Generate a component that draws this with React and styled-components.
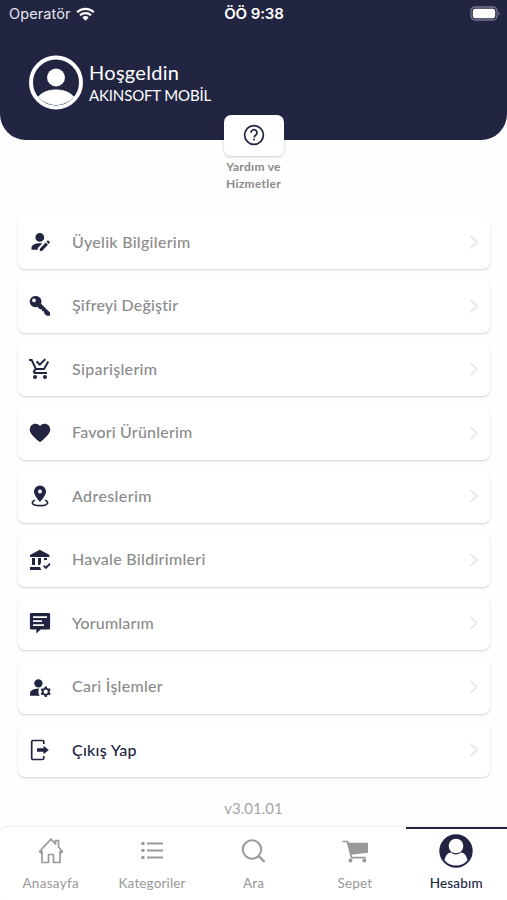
import React, { Fragment } from 'react';
import styled, { createGlobalStyle } from 'styled-components';
import { MdManageAccounts } from 'react-icons/md';

const navy = '#222542';
const grey = '#8b8b8b';

const GlobalStyle = createGlobalStyle`
  * {
    box-sizing: border-box;
  }

  body {
    margin: 0;
    background: #fefefe;
    font-family: Lato, 'Open Sans', sans-serif;
  }
`

const Screen = styled.div`
  display: flex;
  flex-direction: column;
  width: 507px;
  height: 900px;
  overflow: hidden;
`

const Header = styled.header`
  height: 139.5px;
  flex-shrink: 0;
  background: ${navy};
  border-radius: 0 0 26px 26px;
  color: white;
`

const StatusBar = styled.div`
  display: grid;
  grid-template-columns: 1fr auto 1fr;
  align-items: center;
  height: 27px;
  padding: 0 6px 0 9px;
  font-family: Inter, Roboto, sans-serif;
`

const Operator = styled.div`
  display: flex;
  align-items: center;
  gap: 5px;
  font-size: 14.5px;
  letter-spacing: ${props => props.$spacing};
  color: #e4e4ee;
`

const Clock = styled.div`
  margin-right: 2px;
  font-size: 15px;
  font-weight: 600;
  letter-spacing: -0.1px;
`

const Battery = styled.svg`
  justify-self: end;
`

const Profile = styled.div`
  display: flex;
  align-items: center;
  gap: 6px;
  padding: 28px 0 0 28px;
`

const Welcome = styled.div`
  font-size: 20px;
  line-height: 25px;
  letter-spacing: ${props => props.$spacing};
`

const Company = styled.div`
  font-size: 15px;
  line-height: 21px;
  letter-spacing: ${props => props.$spacing};
`

const Help = styled.div`
  display: flex;
  flex-direction: column;
  align-items: center;
  height: 76px;
  flex-shrink: 0;
  margin-top: -24.5px;
  margin-bottom: 24.5px;
`

const HelpButton = styled.button`
  display: flex;
  justify-content: center;
  align-items: center;
  width: 60px;
  height: 41px;
  flex-shrink: 0;
  padding: 0 0 2px;
  border: none;
  border-radius: 7px;
  background: white;
  box-shadow: 0 1px 3px rgba(0, 0, 0, 0.22);
`

const HelpLabel = styled.div`
  margin-top: 3px;
  font-size: 12px;
  font-weight: 700;
  line-height: 16.5px;
  text-align: center;
  letter-spacing: ${props => props.$spacing};
  color: ${grey};
`

const Menu = styled.nav`
  display: flex;
  flex-direction: column;
  gap: 10px;
  padding: 0 17px 0 18px;
`

const MenuRow = styled.a`
  display: flex;
  align-items: center;
  height: 53.5px;
  padding: 0 9px 0 10px;
  border-radius: 7px;
  background: white;
  box-shadow: 0 1px 2px rgba(0, 0, 0, 0.18);
  color: ${props => props.$dark ? navy : grey};
`

const MenuIcon = styled.svg`
  width: 24px;
  height: 24px;
  flex-shrink: 0;
  fill: ${navy};
`

const MenuLabel = styled.span`
  flex: 1;
  margin-left: 20px;
  padding-bottom: 2px;
  font-size: 16px;
  font-weight: 500;
  letter-spacing: ${props => props.$spacing};
`

const Version = styled.div`
  margin-top: 21px;
  font-size: 15px;
  line-height: 20px;
  text-align: center;
  letter-spacing: ${props => props.$spacing};
  color: #a5a5a5;
`

const TabBar = styled.nav`
  display: grid;
  grid-template-columns: repeat(5, 1fr);
  height: 73px;
  flex-shrink: 0;
  margin-top: auto;
  border-radius: 7px 0 0 7px;
  background: white;
  box-shadow: 0 -1px 2px rgba(0, 0, 0, 0.08);
`

const Tab = styled.a`
  display: flex;
  flex-direction: column;
  align-items: center;
  padding-top: 5px;
  border-top: 2px solid ${props => props.$active ? navy : 'transparent'};
  color: ${props => props.$active ? navy : '#999'};
`

const TabLabel = styled.span`
  margin-top: 6px;
  font-size: 13.5px;
  font-weight: ${props => props.$active ? 500 : 400};
  line-height: 18px;
  letter-spacing: ${props => props.$spacing};
`

const menu = [
  {
    label: 'Üyelik Bilgilerim',
    spacing: '0.28px',
    icon: <path d="M21.800 12.800l-1.100 1.100-2.200-2.200 1.100-1.100a.6.6 0 0 1 .8 0l1.400 1.400a.6.6 0 0 1 0 .8M11.800 18.700l6-6.200 2.200 2.200-6 6.200h-2.200v-2.200M11.500 13.300c-4.500 0-8 2-8 4.300v2.100h6.300v-1.800l4.400-4.300c-.8-.2-1.700-.3-2.700-.3m.3-10.300a4.400 4.400 0 1 0 0 8.800 4.400 4.400 0 0 0 0-8.800z" />,
  },
  {
    label: 'Şifreyi Değiştir',
    spacing: '0.17px',
    icon: <path fillRule="evenodd" d="M7.300 2a5.600 5.600 0 1 0 2 10.800l2.600 2.500 2-.1.2 2.100 2-.1.2 2.200 2.500 2.400h3.200v-3.300l-9-8.700A5.600 5.600 0 0 0 7.300 2zM6 4.400a1.900 1.900 0 1 1 0 3.800 1.900 1.900 0 0 1 0-3.800z" />,
  },
  {
    label: 'Siparişlerim',
    spacing: '0.32px',
    icon: <path d="M9 20a2 2 0 1 1-4 0 2 2 0 0 1 4 0m8-2a2 2 0 1 0 0 4 2 2 0 0 0 0-4M7.200 14.800v-.1l.9-1.700h7.400c.7 0 1.400-.4 1.700-1l3.900-7-1.700-1-3.900 7h-7L4.300 2H1v2h2l3.600 7.600L5.200 14c-.1.3-.2.6-.2 1 0 1.100.9 2 2 2h12v-2H7.400c-.1 0-.2-.1-.2-.2M18 2.800l-1.400-1.400-4.800 4.800-2.600-2.600L7.800 5l4 4L18 2.800z" />,
  },
  {
    label: 'Favori Ürünlerim',
    spacing: '0.2px',
    icon: <path d="M12 21.300l-1.500-1.300C5.100 15.200 1.800 12.300 1.800 8.400c0-3.200 2.500-5.600 5.600-5.600 1.800 0 3.500.8 4.600 2.100 1.100-1.300 2.800-2.100 4.600-2.100 3.100 0 5.600 2.400 5.600 5.600 0 3.900-3.300 6.800-8.700 11.600L12 21.300z" />,
  },
  {
    label: 'Adreslerim',
    spacing: '0.38px',
    icon: (
      <Fragment>
        <path fillRule="evenodd" d="M12 1.600a6 6 0 0 0-6 6c0 4.200 6 10.400 6 10.400s6-6.200 6-10.400a6 6 0 0 0-6-6zm0 4a2 2 0 1 1 0 4 2 2 0 0 1 0-4z" />
        <path d="M7 16.200c-1.800.6-2.700 1.300-2.700 2.300 0 2 3.700 3.200 7.700 3.200s7.700-1.200 7.700-3.200c0-1-.9-1.700-2.700-2.300" fill="none" stroke={navy} strokeWidth="1.700" />
      </Fragment>
    ),
  },
  {
    label: 'Havale Bildirimleri',
    spacing: '0.29px',
    icon: <path d="M17.800 21.200L15 18.200l1.200-1.200 1.600 1.600 3.600-3.600 1.200 1.400-4.800 4.800M13 10h-3v7h2.100c.1-.8.5-1.600.9-2.300V10m3 0v2.300c.6-.2 1.300-.3 2-.3.3 0 .7 0 1 .1V10h-3m-3.900 9H2v3h11.500c-.7-.8-1.200-1.800-1.400-3M21.500 7l-9.700-5.300L2 7v2h19.500V7M7 17v-7H4v7h3z" />,
  },
  {
    label: 'Yorumlarım',
    spacing: '0.17px',
    icon: <path fillRule="evenodd" d="M3.300 2h17.400c.8 0 1.400.6 1.400 1.400v13.700c0 .8-.6 1.400-1.400 1.400h-8L8.300 22.500v-4h-5c-.8 0-1.400-.6-1.400-1.400V3.400C1.900 2.600 2.500 2 3.300 2zM5 5.200v1.700h14V5.200zm0 4v1.700h9V9.200zm0 4v1.700h11v-1.700z" />,
  },
  {
    label: 'Cari İşlemler',
    spacing: '0.27px',
    icon: <MdManageAccounts size="25" color={navy} />,
  },
  {
    label: 'Çıkış Yap',
    spacing: '0.27px',
    dark: true,
    icon: (
      <Fragment>
        <path d="M15.800 6V3.800a1.300 1.300 0 0 0-1.300-1.300H5a1.300 1.300 0 0 0-1.300 1.300v16.400A1.300 1.300 0 0 0 5 21.500h9.500a1.300 1.300 0 0 0 1.300-1.300V18" fill="none" stroke={navy} strokeWidth="1.700" />
        <path d="M9 10.200h6.500V7.800l5.300 4.200-5.300 4.200v-2.400H9z" />
      </Fragment>
    ),
  },
];

const tabs = [
  {
    label: 'Anasayfa',
    spacing: '0.3px',
    icon: <path d="M5.500 17.500l1.200 1.200L8 17.500v11h6.500v-8h5v8H26v-11l1.300 1.200 1.200-1.200L24.500 13V6.500h-3V10L17 5.200 5.500 17.500z" fill="none" stroke="currentColor" strokeWidth="1.700" strokeLinejoin="round" />,
  },
  {
    label: 'Kategoriler',
    spacing: '0.15px',
    icon: (
      <Fragment>
        <path d="M12 9.500H28M12 16.500H28M12 23.500H28" stroke="currentColor" strokeWidth="2.200" />
        <path d="M6.500 9.500h3M6.500 16.500h3M6.500 23.500h3" stroke="currentColor" strokeWidth="3" />
      </Fragment>
    ),
  },
  {
    label: 'Ara',
    spacing: '0.2px',
    icon: (
      <Fragment>
        <circle cx="16" cy="15.500" r="9.200" fill="none" stroke="currentColor" strokeWidth="2" />
        <path d="M22.500 22l6 5.800" stroke="currentColor" strokeWidth="2.400" />
      </Fragment>
    ),
  },
  {
    label: 'Sepet',
    spacing: '0.2px',
    icon: (
      <Fragment>
        <path d="M9.500 8.700H30v10.100l-17.500 2z" fill="currentColor" />
        <path d="M4.500 7.500h5l4 16.200h14.300" fill="none" stroke="currentColor" strokeWidth="1.700" />
        <circle cx="12.500" cy="26.500" r="2" fill="currentColor" />
        <circle cx="26.300" cy="26.500" r="2" fill="currentColor" />
      </Fragment>
    ),
  },
  {
    label: 'Hesabım',
    spacing: '0.2px',
    active: true,
    icon: (
      <Fragment>
        <circle cx="17" cy="17" r="16.700" fill={navy} />
        <circle cx="17" cy="12" r="7.300" fill="white" />
        <path d="M5.500 26.200c1-5 3.600-7.700 6.700-7.700 1.300 1.300 3 2 4.800 2s3.500-.7 4.800-2c3.100 0 5.700 2.700 6.700 7.700a15 15 0 0 1-23 0z" fill="white" />
      </Fragment>
    ),
  },
];

function WifiIcon() {
  return (
    <svg width="19" height="14" viewBox="0 0 19 14">
      <path d="M1.200 5.300a12 12 0 0 1 16.600 0M4 8.300a8 8 0 0 1 11 0" fill="none" stroke="white" strokeWidth="2.200" />
      <path d="M6.300 10.600a4.700 4.700 0 0 1 6.400 0L9.500 13.800z" fill="white" />
    </svg>
  );
}

function AvatarIcon() {
  return (
    <svg width="55" height="55" viewBox="0 0 55 55">
      <circle cx="28" cy="27.500" r="25" fill="none" stroke="white" strokeWidth="4" />
      <circle cx="28" cy="22.500" r="9" fill="white" />
      <path d="M10.500 42c3.500-4.700 10-7 17.500-7s14 2.300 17.500 7a24 24 0 0 1-35 0z" fill="white" stroke="white" />
    </svg>
  );
}

export default function App() {
  return (
    <Fragment>
      <GlobalStyle />
      <Screen>
        <Header>
          <StatusBar>
            <Operator $spacing="0.1px">
              Operatör
              <WifiIcon />
            </Operator>
            <Clock>ÖÖ 9:38</Clock>
            <Battery width="31" height="15" viewBox="0 0 31 15">
              <rect x="1" y="1" width="26" height="13" rx="4" fill="none" stroke="#74768a" strokeWidth="1.300" />
              <rect x="2.800" y="2.800" width="22.400" height="9.400" rx="2.200" fill="white" />
              <path d="M28.500 5.500c1.600.6 1.600 3.400 0 4z" fill="#74768a" />
            </Battery>
          </StatusBar>
          <Profile>
            <AvatarIcon />
            <div>
              <Welcome $spacing="0.3px">Hoşgeldin</Welcome>
              <Company $spacing="-0.15px">AKINSOFT MOBİL</Company>
            </div>
          </Profile>
        </Header>
        <Help>
          <HelpButton>
            <svg width="22" height="22" viewBox="0 0 22 22" fill="none" stroke={navy} strokeWidth="1.700">
              <circle cx="11" cy="11" r="9.400" />
              <path d="M8 8.700a3 3 0 1 1 4.800 2.300c-1 .7-1.700 1.200-1.700 2.400" />
              <path d="M11 14.800v1.800" />
            </svg>
          </HelpButton>
          <HelpLabel $spacing="0.3px">Yardım ve<br />Hizmetler</HelpLabel>
        </Help>
        <Menu>
          {menu.map(item => (
            <MenuRow key={item.label} $dark={item.dark}>
              <MenuIcon viewBox="0 0 24 24">{item.icon}</MenuIcon>
              <MenuLabel $spacing={item.spacing}>{item.label}</MenuLabel>
              <svg width="14" height="16" viewBox="0 0 14 16">
                <path d="M3.500 2l6.500 6-6.500 6" fill="none" stroke="#e8e8e8" strokeWidth="1.800" />
              </svg>
            </MenuRow>
          ))}
        </Menu>
        <Version $spacing="0px">v3.01.01</Version>
        <TabBar>
          {tabs.map(tab => (
            <Tab key={tab.label} $active={tab.active}>
              <svg width="34" height="34" viewBox="0 0 34 34">{tab.icon}</svg>
              <TabLabel $active={tab.active} $spacing={tab.spacing}>{tab.label}</TabLabel>
            </Tab>
          ))}
        </TabBar>
      </Screen>
    </Fragment>
  );
}
